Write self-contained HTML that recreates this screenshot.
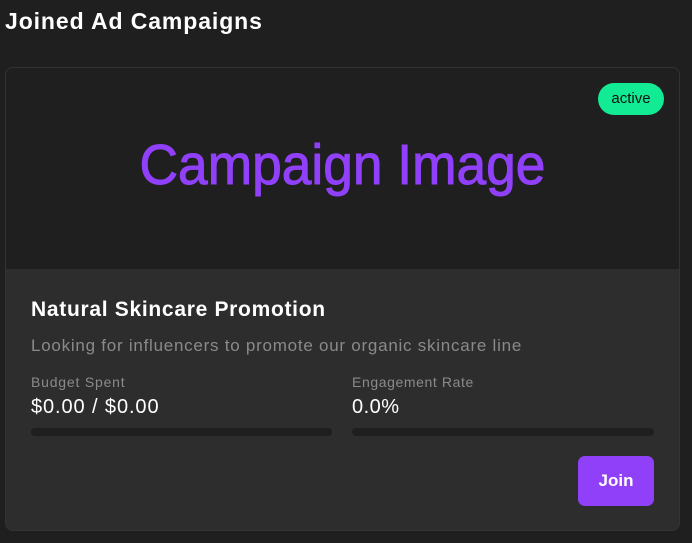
<!DOCTYPE html>
<html><head><style>
*{margin:0;padding:0;box-sizing:border-box}
body{width:692px;height:543px;background:#1f1f1f;font-family:"Liberation Sans",sans-serif;color:#fff;position:relative;overflow:hidden}
.t{position:absolute;left:5px;top:8px;font-size:23px;font-weight:bold;letter-spacing:0.9px}
.card{position:absolute;left:5px;top:67px;width:675px;height:464px;border:1px solid #333;border-radius:8px;background:#2d2d2d;overflow:hidden}
.img{position:absolute;left:0;top:0;width:100%;height:201px;background:#1f1f1f}
.ci{position:absolute;left:-200px;right:-200px;top:69px;text-align:center;color:#9140fa;font-size:57px;line-height:1;transform:scaleX(0.935);margin-left:0px;-webkit-text-stroke:1px #9140fa}
.badge{position:absolute;left:592px;top:15px;width:66px;height:32px;border-radius:16px;background:#12ea94;color:#111;font-size:15px;text-align:center;line-height:32px}
.a{position:absolute;white-space:nowrap}
.bar{position:absolute;height:8px;border-radius:4px;background:#1f1f1f}
.btn{position:absolute;left:572px;top:388px;width:76px;height:50px;border-radius:7px;background:#9140fa;color:#fff;font-size:17px;font-weight:bold;text-align:center;line-height:50px}
</style></head><body>
<div class="t">Joined Ad Campaigns</div>
<div class="card">
<div class="img"><div class="ci">Campaign Image</div><div class="badge">active</div></div>
<div class="a" style="left:25px;top:230px;font-size:21px;font-weight:bold;letter-spacing:0.7px">Natural Skincare Promotion</div>
<div class="a" style="left:25px;top:268px;font-size:17px;color:#8a8a8a;letter-spacing:0.75px">Looking for influencers to promote our organic skincare line</div>
<div class="a" style="left:25px;top:306px;font-size:14px;color:#8a8a8a;letter-spacing:0.8px">Budget Spent</div>
<div class="a" style="left:25px;top:328px;font-size:20px;letter-spacing:0.9px">$0.00 / $0.00</div>
<div class="a" style="left:346px;top:306px;font-size:14px;color:#8a8a8a;letter-spacing:0.6px">Engagement Rate</div>
<div class="a" style="left:346px;top:328px;font-size:20px;letter-spacing:0.5px">0.0%</div>
<div class="bar" style="left:25px;top:360px;width:301px"></div>
<div class="bar" style="left:346px;top:360px;width:302px"></div>
<div class="btn">Join</div>
</div>
</body></html>
